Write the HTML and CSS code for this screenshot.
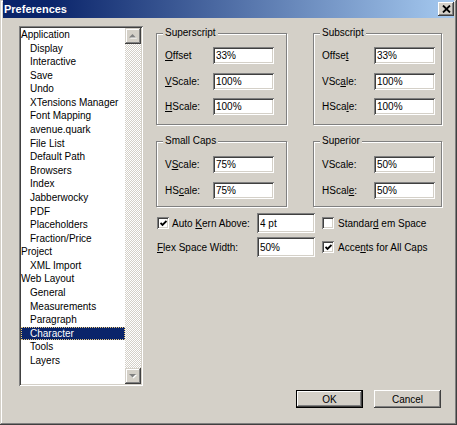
FILE: index.html
```html
<!DOCTYPE html>
<html>
<head>
<meta charset="utf-8">
<title>Preferences</title>
<link rel="stylesheet" href="styles.css">
</head>
<body>
<div class="window">
  <div class="titlebar">
    <span class="title">Preferences</span>
    <span class="close"><svg width="9" height="8" viewBox="0 0 9 8"><path d="M1 0.5 8 7.5M8 0.5 1 7.5" stroke="#000" stroke-width="1.8" fill="none"/></svg></span>
  </div>
  <div class="content">
    <div class="listbox">
      <ul class="tree">
        <li>Application</li>
        <li class="sub">Display</li>
        <li class="sub">Interactive</li>
        <li class="sub">Save</li>
        <li class="sub">Undo</li>
        <li class="sub">XTensions Manager</li>
        <li class="sub">Font Mapping</li>
        <li class="sub">avenue.quark</li>
        <li class="sub">File List</li>
        <li class="sub">Default Path</li>
        <li class="sub">Browsers</li>
        <li class="sub">Index</li>
        <li class="sub">Jabberwocky</li>
        <li class="sub">PDF</li>
        <li class="sub">Placeholders</li>
        <li class="sub">Fraction/Price</li>
        <li>Project</li>
        <li class="sub">XML Import</li>
        <li>Web Layout</li>
        <li class="sub">General</li>
        <li class="sub">Measurements</li>
        <li class="sub">Paragraph</li>
        <li class="sub sel"><span>Character</span></li>
        <li class="sub">Tools</li>
        <li class="sub">Layers</li>
      </ul>
      <div class="scrollbar">
        <span class="sbtn"><svg width="8" height="5" viewBox="0 0 8 5"><polygon points="4.5,1 8,4.5 1,4.5" fill="#fff"/><polygon points="3.5,0 7,3.5 0,3.5" fill="#808080"/></svg></span>
        <span class="track"></span>
        <span class="sbtn"><svg width="8" height="5" viewBox="0 0 8 5"><polygon points="1,1 8,1 4.5,4.5" fill="#fff"/><polygon points="0,0 7,0 3.5,3.5" fill="#808080"/></svg></span>
      </div>
    </div>
    <div class="panel">
      <div class="groups">
        <div class="group tall">
          <span class="group-title">Superscript</span>
          <div class="rows">
            <label><u>O</u>ffset</label><input class="field" value="33%">
            <label><u>V</u>Scale:</label><input class="field" value="100%">
            <label><u>H</u>Scale:</label><input class="field" value="100%">
          </div>
        </div>
        <div class="group tall right">
          <span class="group-title">Subscript</span>
          <div class="rows">
            <label>Offse<u>t</u></label><input class="field" value="33%">
            <label>VSc<u>a</u>le:</label><input class="field" value="100%">
            <label>HSca<u>l</u>e:</label><input class="field" value="100%">
          </div>
        </div>
        <div class="group short">
          <span class="group-title">Small Caps</span>
          <div class="rows">
            <label>V<u>S</u>cale:</label><input class="field" value="75%">
            <label>HS<u>c</u>ale:</label><input class="field" value="75%">
          </div>
        </div>
        <div class="group short right">
          <span class="group-title">Superior</span>
          <div class="rows">
            <label>VScale:</label><input class="field" value="50%">
            <label>HScal<u>e</u>:</label><input class="field" value="50%">
          </div>
        </div>
      </div>
      <div class="options">
        <label class="opt"><span class="check"><svg width="7" height="7" viewBox="0 0 7 7"><path d="M0.5 3 2.5 5 6.5 1" stroke="#000" stroke-width="1.8" fill="none"/></svg></span><span class="txt">Auto <u>K</u>ern Above:</span></label>
        <input class="field wide" value="4 pt">
        <label class="opt right"><span class="check"></span><span class="txt">Standar<u>d</u> em Space</span></label>
        <label class="opt"><span class="txt"><u>F</u>lex Space Width:</span></label>
        <input class="field wide" value="50%">
        <label class="opt right"><span class="check"><svg width="7" height="7" viewBox="0 0 7 7"><path d="M0.5 3 2.5 5 6.5 1" stroke="#000" stroke-width="1.8" fill="none"/></svg></span><span class="txt">Acce<u>n</u>ts for All Caps</span></label>
      </div>
    </div>
  </div>
  <div class="footer">
    <button class="btn default">OK</button>
    <button class="btn">Cancel</button>
  </div>
</div>
</body>
</html>
```

FILE: styles.css
```css
* { box-sizing: border-box; }
html, body { margin: 0; padding: 0; }
body {
  width: 457px;
  height: 425px;
  overflow: hidden;
  background: #d4d0c8;
  font-family: "Liberation Sans", Arial, sans-serif;
  font-size: 10px;
  color: #000;
}
.window {
  width: 457px;
  height: 425px;
  display: flex;
  flex-direction: column;
  padding: 0 3px 3px 3px;
  background: #d4d0c8;
  box-shadow: inset -1px -1px #404040, inset 1px 1px #d4d0c8, inset -2px -2px #808080, inset 2px 2px #fff;
}
.titlebar {
  height: 18px;
  flex: none;
  display: flex;
  align-items: center;
  justify-content: space-between;
  padding: 0 0 0 1px;
  background: linear-gradient(to right, #0a246a 0%, #0a246a 10%, #a6caf0 100%);
}
.title {
  color: #fff;
  font-weight: bold;
  font-size: 11px;
  line-height: 18px;
}
.close {
  width: 16px;
  height: 14px;
  display: flex;
  align-items: center;
  justify-content: center;
  background: #d4d0c8;
  box-shadow: inset -1px -1px #404040, inset 1px 1px #fff, inset -2px -2px #808080;
}
.content {
  display: flex;
  gap: 13px;
  padding: 8px 0 0 16px;
}
.listbox {
  width: 124px;
  height: 360px;
  flex: none;
  display: flex;
  padding: 2px;
  background: #fff;
  box-shadow: inset 1px 1px #808080, inset -1px -1px #fff, inset 2px 2px #404040, inset -2px -2px #d4d0c8;
}
.tree {
  list-style: none;
  margin: 0;
  padding: 0;
  flex: 1;
  min-width: 0;
}
.tree li {
  height: 13.58px;
  line-height: 13.58px;
  white-space: nowrap;
  overflow: hidden;
}
.tree .sub { padding-left: 9px; }
.tree .sel {
  background: #0a246a;
  color: #fff;
  outline: 1px dotted #e8c87c;
  outline-offset: -1px;
}
.scrollbar {
  width: 16px;
  flex: none;
  display: flex;
  flex-direction: column;
}
.sbtn {
  height: 16px;
  flex: none;
  display: flex;
  align-items: center;
  justify-content: center;
  background: #d4d0c8;
  box-shadow: inset -1px -1px #404040, inset 1px 1px #d4d0c8, inset -2px -2px #808080, inset 2px 2px #fff;
}
.track {
  flex: 1;
  background: repeating-conic-gradient(#fff 0 25%, #d4d0c8 0 50%) 0 0 / 2px 2px;
}
.panel {
  display: flex;
  flex-direction: column;
  padding-top: 7px;
}
.groups {
  display: grid;
  grid-template-columns: 131px 129px;
  column-gap: 26px;
  row-gap: 16px;
}
.group {
  position: relative;
  border: 1px solid #808080;
  box-shadow: inset 1px 1px #fff, 1px 1px #fff;
  padding-left: 8px;
}
.group.tall { padding-top: 13px; padding-bottom: 9px; }
.group.short { padding-top: 14px; padding-bottom: 7.5px; }
.group-title {
  position: absolute;
  top: -7px;
  left: 6px;
  padding: 0 2px;
  line-height: 12px;
  background: #d4d0c8;
}
.rows {
  display: grid;
  grid-template-columns: 48px 61px;
  row-gap: 8.5px;
  align-items: center;
}
.group.right .rows { grid-template-columns: 52px 61px; }
.field {
  width: 61px;
  height: 17px;
  margin: 0;
  padding: 0 3px;
  border: none;
  outline: none;
  background: #fff;
  font-family: "Liberation Sans", Arial, sans-serif;
  font-size: 10px;
  color: #000;
  box-shadow: inset 1px 1px #808080, inset -1px -1px #fff, inset 2px 2px #404040, inset -2px -2px #d4d0c8;
}
.field.wide { width: 58px; height: 20px; }
u { text-decoration: underline; text-underline-offset: 1px; }
.options {
  display: grid;
  grid-template-columns: 100px 58px auto;
  row-gap: 4px;
  align-items: center;
  margin: 6px 0 0 1px;
}
.opt {
  display: flex;
  align-items: center;
  white-space: nowrap;
}
.opt.right { margin-left: 7px; }
.check {
  width: 12px;
  height: 12px;
  flex: none;
  display: flex;
  align-items: center;
  justify-content: center;
  margin-right: 3px;
  background: #fff;
  box-shadow: inset 1px 1px #808080, inset -1px -1px #fff, inset 2px 2px #404040, inset -2px -2px #d4d0c8;
}
.opt.right .check { margin-right: 4px; }
.footer {
  margin-top: auto;
  display: flex;
  justify-content: flex-end;
  gap: 11px;
  padding: 0 13px 14px 0;
}
.btn {
  width: 67px;
  height: 18px;
  margin: 0;
  padding: 0;
  border: none;
  background: #d4d0c8;
  font-family: "Liberation Sans", Arial, sans-serif;
  font-size: 10px;
  color: #000;
  box-shadow: inset -1px -1px #404040, inset 1px 1px #fff, inset -2px -2px #808080, inset 2px 2px #d4d0c8;
}
.btn.default {
  box-shadow: inset 0 0 0 1px #000, inset -2px -2px #404040, inset 2px 2px #fff, inset -3px -3px #808080;
}
```
